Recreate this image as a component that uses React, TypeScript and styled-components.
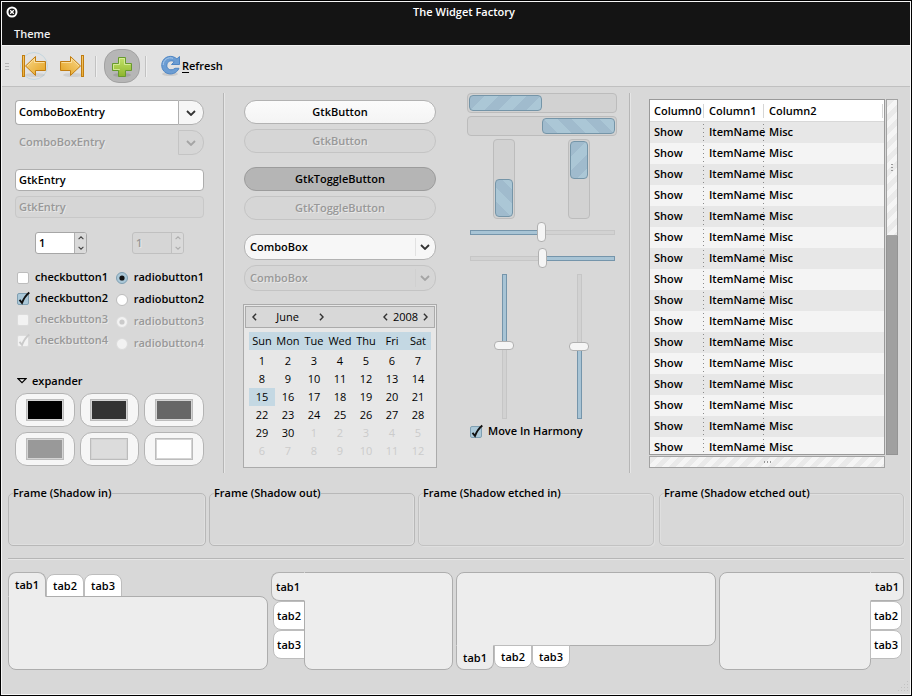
import React, { useState } from 'react';
import styled, { createGlobalStyle, css } from 'styled-components';

const GlobalStyle = createGlobalStyle`
  *, *::before, *::after { box-sizing: border-box; }
  body {
    margin: 0;
    color: #000;
    background: #d8d8d8;
    font: 600 11px/14px 'Open Sans', 'Noto Sans', sans-serif;
  }
  button, input, select { font: inherit; color: inherit; margin: 0; padding: 0; }
  button { cursor: default; }
`;

const disabledText = css`
  color: #989898;
  -webkit-text-fill-color: #989898;
  text-shadow: 1px 1px 0 #e8e8e8;
  opacity: 1;
`;

/* ---------- window ---------- */

const Window = styled.div`
  display: flex;
  flex-direction: column;
  min-height: 100vh;
  border: 1px solid #000;
  background: #d8d8d8;
  box-shadow: inset 0 0 0 1px #f6f6f6;
  padding: 1px;
`;

const TitleBar = styled.header`
  display: flex;
  align-items: center;
  height: 20px;
  padding-left: 4px;
  background: #141414;
  color: #fff;
`;

const CloseButton = styled.button`
  display: flex;
  width: 12px;
  height: 12px;
  border: 0;
  background: none;
`;

const Title = styled.h1`
  flex: 1;
  margin: 0;
  font: inherit;
  text-align: center;
`;

const MenuBar = styled.nav`
  display: flex;
  align-items: center;
  height: 23px;
  padding: 0 12px;
  background: #141414;
`;

const MenuItem = styled.button`
  border: 0;
  background: none;
  color: #f0f0f0;
`;

/* ---------- toolbar ---------- */

const Toolbar = styled.div`
  display: flex;
  align-items: center;
  height: 42px;
  padding-left: 3px;
  border-top: 1px solid #f2f2f2;
  border-bottom: 1px solid #c0c0c0;
  background: #e2e2e2;
`;

const Handle = styled.span`
  width: 4px;
  height: 7px;
  margin-right: 11px;
  background: repeating-linear-gradient(#b4b4b4 0 1px, transparent 1px 3px);
`;

const ToolSeparator = styled.span<{ $left: number; $right: number }>`
  width: 2px;
  height: 21px;
  margin: 0 ${p => p.$right}px 0 ${p => p.$left}px;
  background: #c2c2c2;
  border-right: 1px solid #efefef;
`;

const ToolButton = styled.button<{ $look?: 'ring' | 'pressed' }>`
  display: flex;
  align-items: center;
  justify-content: center;
  width: 28px;
  height: 28px;
  border: 1px solid ${p => (p.$look === 'ring' ? '#c3d6df' : 'transparent')};
  border-radius: 50%;
  background: none;
  svg { flex: none; }
  ${p => p.$look === 'pressed' && css`
    width: 36px;
    height: 34px;
    border-color: #a2a2a2;
    border-radius: 15px;
    background: #b6b6b6;
  `}
`;

const LastSlot = styled.span`
  margin-left: 10px;
`;

const RefreshButton = styled.button`
  display: flex;
  align-items: center;
  gap: 1px;
  border: 0;
  background: none;
  u { text-underline-offset: 2px; }
`;

/* ---------- main area ---------- */

const Main = styled.main`
  display: flex;
  padding: 6px 12px 0 13px;
`;

const Column = styled.section<{ $grow: number; $top?: number }>`
  display: flex;
  flex-direction: column;
  flex: ${p => p.$grow} 1 0;
  min-width: 0;
  padding-top: ${p => p.$top ?? 7}px;
`;

const ProgressColumn = styled(Column)`
  margin-left: 31px;
`;

const Divider = styled.div<{ $left: number; $right: number }>`
  width: 2px;
  height: 380px;
  margin: 0 ${p => p.$right}px 0 ${p => p.$left}px;
  background: #b6b6b6;
  border-right: 1px solid #e6e6e6;
`;

const Stack = styled.div<{ $gap: number; $top?: number }>`
  display: flex;
  flex-direction: column;
  gap: ${p => p.$gap}px;
  margin-top: ${p => p.$top ?? 0}px;
`;

const ComboEntry = styled.div`
  display: flex;
  height: 25px;
`;

const EntryBox = styled.input`
  flex: 1;
  width: 100%;
  min-width: 0;
  height: 22px;
  padding: 0 3px 1px;
  border: 1px solid #adadad;
  border-radius: 4px;
  background: #fff;
  outline: 0;
  &:disabled { ${disabledText} background: #d6d6d6; border-color: #c8c8c8; }
`;

const ComboInput = styled(EntryBox)`
  height: 25px;
  padding-bottom: 2px;
  border-radius: 4px 0 0 4px;
  border-right: 0;
  &:disabled { background: transparent; border-color: transparent; }
`;

const ComboArrow = styled.button`
  display: grid;
  place-items: center;
  width: 26px;
  height: 25px;
  border: 1px solid #b0b0b0;
  border-radius: 0 12px 12px 0;
  background: #f6f6f6;
  color: #333;
  &:disabled { background: #d6d6d6; border-color: #c4c4c4; color: #a4a4a4; }
`;

const SingleEntry = styled(EntryBox)`
  flex: none;
`;

const SpinRow = styled.div`
  display: flex;
  justify-content: space-between;
  margin: 14px 20px 0;
`;

const Spin = styled.div<{ $off?: boolean }>`
  display: flex;
  width: 52px;
  height: 22px;
  border: 1px solid ${p => (p.$off ? '#c0c0c0' : '#a6a6a6')};
  border-radius: 3px;
  background: ${p => (p.$off ? '#d6d6d6' : '#fff')};
  overflow: hidden;
  input {
    flex: 1;
    min-width: 0;
    padding: 0 3px;
    border: 0;
    background: transparent;
    outline: 0;
  }
  input:disabled { ${disabledText} }
`;

const SpinButtons = styled.div<{ $off?: boolean }>`
  display: flex;
  flex-direction: column;
  width: 12px;
  border-left: 1px solid ${p => (p.$off ? '#c0c0c0' : '#b0b0b0')};
  background: #dadada;
  color: ${p => (p.$off ? '#adadad' : '#444')};
  button {
    display: grid;
    place-items: center;
    flex: 1;
    border: 0;
    background: none;
  }
`;

const Choices = styled.div`
  display: flex;
  justify-content: space-between;
  margin: 17px 0 0 2px;
`;

const ChoiceColumn = styled.div<{ $gap: number }>`
  display: flex;
  flex-direction: column;
  gap: ${p => p.$gap}px;
`;

const Choice = styled.label<{ $off?: boolean }>`
  display: flex;
  align-items: center;
  gap: 6px;
  height: 14px;
  white-space: nowrap;
  ${p => p.$off && disabledText}
`;

const ChoiceText = styled.span`
  padding-bottom: 2px;
`;

const Mark = styled.span`
  display: grid;
  width: 12px;
  height: 12px;
  input, svg { grid-area: 1 / 1; }
  svg { pointer-events: none; overflow: visible; visibility: hidden; color: #111; }
  input:checked + svg { visibility: visible; }
  input {
    appearance: none;
    width: 12px;
    height: 12px;
    border: 1px solid #bdbdbd;
    border-radius: 2px;
    background: #fff;
  }
  input:checked { background: #abc8d8; border-color: #7f9fb2; }
  input[type='radio'] { border-radius: 50%; }
  input:disabled { background: #f2f2f2; border-color: #dcdcdc; }
  input:disabled + svg { color: #cacaca; }
`;

const Expander = styled.button`
  display: flex;
  align-items: center;
  gap: 5px;
  width: max-content;
  height: 14px;
  margin: 23px 0 5px 2px;
  border: 0;
  background: none;
`;

const Swatches = styled.div`
  display: grid;
  grid-template-columns: repeat(3, 1fr);
  gap: 5px;
`;

const SwatchButton = styled.button`
  display: grid;
  place-items: center;
  height: 34px;
  border: 1px solid #b4b4b4;
  border-radius: 12px;
  background: #f6f6f6;
`;

const Swatch = styled.span<{ $color: string }>`
  width: 38px;
  height: 22px;
  border: 1px solid #bcbcbc;
  background: ${p => p.$color};
  box-shadow: inset 0 0 0 1px #d4d4d4;
`;

const PushButton = styled.button`
  height: 24px;
  border: 1px solid #b2b2b2;
  border-radius: 12px;
  background: linear-gradient(#fbfbfb, #f4f4f4);
  &[aria-pressed='true'] { background: #b5b5b5; border-color: #9c9c9c; }
  &:disabled { ${disabledText} background: #d6d6d6; border-color: #c4c4c4; }
`;

const SelectWrap = styled.div<{ $off?: boolean }>`
  display: grid;
  align-items: center;
  color: ${p => (p.$off ? '#a4a4a4' : '#333')};
  > * { grid-area: 1 / 1; }
  > span {
    justify-self: end;
    display: grid;
    place-items: center;
    width: 18px;
    height: 18px;
    margin-right: 3px;
    border-left: 1px solid ${p => (p.$off ? '#d0d0d0' : '#e2e2e2')};
    pointer-events: none;
  }
  select {
    appearance: none;
    width: 100%;
    height: 26px;
    padding: 0 5px;
    border: 1px solid #b2b2b2;
    border-radius: 12px;
    background: #f7f7f7;
    color: #000;
  }
  select:disabled { ${disabledText} background: #d6d6d6; border-color: #c4c4c4; }
`;

/* ---------- calendar ---------- */

const CalendarBox = styled.div`
  margin: 13px -1px 0;
  padding: 1px 1px 7px;
  border: 1px solid #ababab;
  background: #e7e7e7;
  font-weight: normal;
`;

const CalendarHead = styled.div`
  display: flex;
  justify-content: space-between;
  align-items: center;
  height: 22px;
  padding: 0 3px;
  border: 1px solid #ababab;
  background: #d8d8d8;
`;

const Stepper = styled.div<{ $width: number }>`
  display: flex;
  align-items: center;
  justify-content: space-between;
  width: ${p => p.$width}px;
  button {
    display: grid;
    place-items: center;
    width: 10px;
    height: 14px;
    border: 0;
    background: none;
    color: #333;
  }
`;

const Days = styled.table`
  width: calc(100% - 8px);
  margin: 4px 4px 0;
  border-collapse: collapse;
  table-layout: fixed;
  th, td { height: 18px; padding: 0; font-weight: normal; text-align: center; line-height: 18px; }
  thead tr { background: #c4d8e3; border-bottom: 2px solid #e7e7e7; }
`;

const Day = styled.td<{ $dim?: boolean; $today?: boolean }>`
  color: ${p => (p.$dim ? '#cbcbcb' : '#000')};
  background: ${p => (p.$today ? '#c4d8e3' : 'none')};
`;

/* ---------- progress bars and sliders ---------- */

const Trough = styled.div<{ $vertical?: boolean; $end?: boolean }>`
  display: flex;
  flex-direction: ${p => (p.$vertical ? 'column' : 'row')};
  justify-content: ${p => (p.$end ? 'flex-end' : 'flex-start')};
  width: ${p => (p.$vertical ? '22px' : 'auto')};
  height: ${p => (p.$vertical ? 80 : 20)}px;
  padding: 1px;
  border: 1px solid #bcbcbc;
  border-radius: 4px;
  background: #d2d2d2;
`;

const Fill = styled.div<{ $angle: number }>`
  flex: 0 0 50%;
  border: 1px solid #7595a8;
  border-radius: 4px;
  background: repeating-linear-gradient(${p => p.$angle}deg, #a0bbcd 0 10px, #abc7d6 10px 20px);
`;

const TroughPair = styled.div`
  display: flex;
  justify-content: space-between;
  padding: 0 27px 0 26px;
`;

const SliderPair = styled.div`
  display: flex;
  justify-content: space-around;
`;

const thumb = css`
  appearance: none;
  border: 1px solid #b0b0b0;
  border-radius: 4px;
  background: #f5f5f5;
`;

const HSlider = styled.input<{ $fromEnd?: boolean }>`
  appearance: none;
  display: block;
  width: calc(100% - 5px);
  height: 20px;
  margin: 0 2px 0 3px;
  background: none;
  &::-webkit-slider-runnable-track {
    height: 5px;
    border: 1px solid;
    border-image: linear-gradient(${p => (p.$fromEnd ? '270deg' : '90deg')}, #7595ab 50%, #c6c6c6 50%) 1;
    background: linear-gradient(${p => (p.$fromEnd ? '270deg' : '90deg')}, #a8c4d5 50%, #d2d2d2 50%);
  }
  &::-webkit-slider-thumb {
    ${thumb}
    width: 9px;
    height: 20px;
    margin-top: -9px;
  }
`;

const VSlider = styled.input<{ $fromEnd?: boolean }>`
  appearance: none;
  writing-mode: vertical-lr;
  width: 20px;
  height: 145px;
  background: none;
  &::-webkit-slider-runnable-track {
    width: 5px;
    border: 1px solid;
    border-image: linear-gradient(${p => (p.$fromEnd ? '0deg' : '180deg')}, #7595ab 50%, #c6c6c6 50%) 1;
    background: linear-gradient(${p => (p.$fromEnd ? '0deg' : '180deg')}, #a8c4d5 50%, #d2d2d2 50%);
  }
  &::-webkit-slider-thumb {
    ${thumb}
    width: 20px;
    height: 9px;
    margin-left: -9px;
  }
`;

const HarmonySlot = styled.div`
  margin: 6px 0 0 3px;
`;

/* ---------- list ---------- */

const ListGrid = styled.div`
  display: grid;
  grid-template-columns: minmax(0, 1fr) 12px;
  gap: 1px;
`;

const ListPane = styled.div`
  height: 356px;
  border: 1px solid #999;
  overflow: hidden;
`;

const List = styled.table`
  width: 100%;
  border-collapse: separate;
  border-spacing: 0;
  table-layout: fixed;
  col:nth-child(1) { width: 54px; }
  col:nth-child(2) { width: 60px; }
  th, td { height: 21px; padding: 0 0 1px 4px; text-align: left; white-space: nowrap; }
  th + th, td + td { padding-left: 5px; }
  th { height: 22px; padding-bottom: 0; font-weight: inherit; border-bottom: 1px solid #d8d8d8; background: linear-gradient(#d6d6d6, #d6d6d6) right 4px / 1px 14px no-repeat #fff; }
  th:last-child { background-position: right 1px top 4px; }
  td:not(:last-child) { background: repeating-linear-gradient(transparent 0 2px, #8c8c8c 2px 3px, transparent 3px 4px) right / 1px 100% no-repeat; }
  tbody tr:nth-child(odd) { background: #e7e7e7; }
  tbody tr:nth-child(even) { background: #f4f4f4; }
`;

const Thumb = styled.div<{ $vertical?: boolean }>`
  display: grid;
  place-items: center;
  height: ${p => (p.$vertical ? 137 : 12)}px;
  border: 1px solid #a2a2a2;
  background: repeating-linear-gradient(135deg, #eaeaea 0 5px, #f5f5f5 5px 10px);
  span {
    width: ${p => (p.$vertical ? 2 : 7)}px;
    height: ${p => (p.$vertical ? 7 : 2)}px;
    background: repeating-linear-gradient(${p => (p.$vertical ? 180 : 90)}deg, #999 0 1px, transparent 1px 3px);
  }
`;

const ScrollTrack = styled.div`
  background: #a0a0a0;
  border: 1px solid #949494;
  ${Thumb} { margin: -1px; }
`;

/* ---------- frames ---------- */

const Frames = styled.div`
  display: grid;
  grid-template-columns: 198fr 206fr 236fr 247fr;
  align-items: start;
  gap: 3px;
  padding: 13px 6px 0;
`;

const Frame = styled.fieldset<{ $soft?: boolean }>`
  min-width: 0;
  height: 60px;
  margin: 0;
  padding: 0 4px;
  border: 1px solid ${p => (p.$soft ? '#c2c2c2' : '#b8b8b8')};
  border-radius: 5px;
  box-shadow: ${p => (p.$soft ? 'inset 1px 1px 0 #dfdfdf, 1px 1px 0 #dfdfdf' : 'inset -1px -1px 0 #dfdfdf')};
  legend { height: 14px; padding: 0; white-space: nowrap; }
  &:last-child { margin-left: 2px; }
`;

const Rule = styled.hr`
  height: 2px;
  margin: 12px 6px 0;
  border: 0;
  border-top: 1px solid #b6b6b6;
  background: #e6e6e6;
`;

/* ---------- notebooks ---------- */

type Side = 'top' | 'left' | 'bottom' | 'right';

const directions = { top: 'column', bottom: 'column-reverse', left: 'row', right: 'row-reverse' };
const panelRadius = { top: '0 8px 8px 8px', bottom: '8px 8px 8px 0', left: '0 8px 8px 8px', right: '8px 0 8px 8px' };
const tabRadius = { top: '8px 8px 0 0', bottom: '0 0 8px 8px', left: '8px 0 0 8px', right: '0 8px 8px 0' };
const tabAlign = { top: 'flex-end', bottom: 'flex-start', left: 'flex-end', right: 'flex-start' };
const opposite = { top: 'bottom', bottom: 'top', left: 'right', right: 'left' };
const isRow = (s: Side) => s === 'top' || s === 'bottom';

const Notebooks = styled.div`
  display: flex;
  gap: 3px;
  padding: 12px 6px 0;
`;

const NotebookBox = styled.div<{ $side: Side; $grow: number }>`
  display: flex;
  flex-direction: ${p => directions[p.$side]};
  flex: ${p => p.$grow} 1 0;
  min-width: 0;
  height: 98px;
`;

const TabList = styled.div<{ $side: Side }>`
  display: flex;
  flex-direction: ${p => (isRow(p.$side) ? 'row' : 'column')};
  align-items: ${p => tabAlign[p.$side]};
  margin-${p => opposite[p.$side]}: -1px;
`;

const Tab = styled.button<{ $side: Side }>`
  width: ${p => (isRow(p.$side) ? 38 : 32)}px;
  height: ${p => (isRow(p.$side) ? 23 : 29)}px;
  border: 1px solid #bdbdbd;
  border-radius: ${p => tabRadius[p.$side]};
  background: #fff;
  &[aria-selected='true'] {
    position: relative;
    z-index: 1;
    width: ${p => (isRow(p.$side) ? 38 : 34)}px;
    height: ${p => (isRow(p.$side) ? 25 : 29)}px;
    border-color: #b0b0b0;
    border-${p => opposite[p.$side]}-color: #ededed;
    background: #ededed;
  }
`;

const Panel = styled.div<{ $side: Side }>`
  flex: 1;
  border: 1px solid #adadad;
  border-radius: ${p => panelRadius[p.$side]};
  background: #ededed;
`;

const Footer = styled.footer`
  display: flex;
  flex: 1;
  align-items: flex-end;
  justify-content: flex-end;
  padding: 0 1px 2px;
`;

/* ---------- drawings ---------- */

const Chevron = ({ dir = 'down', w = 10, h = 6 }: { dir?: 'down' | 'up' | 'left' | 'right'; w?: number; h?: number }) => {
  const paths = { down: 'M1 1 L5 5 L9 1', up: 'M1 5 L5 1 L9 5', left: 'M5 1 L1 5 L5 9', right: 'M1 1 L5 5 L1 9' };
  const box = dir === 'down' || dir === 'up' ? '0 0 10 6' : '0 0 6 10';
  return (
    <svg width={w} height={h} viewBox={box} fill="none" stroke="currentColor" strokeWidth="1.8">
      <path d={paths[dir]} />
    </svg>
  );
};

const CloseIcon = () => (
  <svg width="12" height="12" viewBox="0 0 12 12">
    <circle cx="6" cy="6" r="4.500" fill="#111" stroke="#fff" strokeWidth="2" />
    <path d="M4.200 4.200 L7.800 7.800 M7.800 4.200 L4.200 7.800" stroke="#fff" strokeWidth="1.300" />
  </svg>
);

const GoEndIcon = ({ id, last }: { id: string; last?: boolean }) => (
  <svg width="26" height="24" viewBox="-1 0 26 24">
    <defs>
      <linearGradient id={id} x1="0" y1="0" x2="1" y2="1">
        <stop offset="0" stopColor="#f9d98c" />
        <stop offset="1" stopColor="#e3a01c" />
      </linearGradient>
    </defs>
    <ellipse cx="13" cy="21" rx="10" ry="2" fill="#000" opacity=".08" />
    <g transform={last ? 'matrix(-1 0 0 1 24 0)' : undefined} stroke="#c17d11" fill={`url(#${id})`}>
      <rect x=".5" y="1.500" width="2" height="21" />
      <path d="M3.500 12 L13.500 2.500 V7.500 H23.500 V16.500 H13.500 V21.500 Z" strokeLinejoin="round" />
      <path d="M5 12 L12.500 4.800 V8.500 H22.500" fill="none" stroke="#fce6ae" opacity=".8" />
    </g>
  </svg>
);

const AddIcon = () => (
  <svg width="22" height="24" viewBox="0 0 22 24">
    <defs>
      <linearGradient id="plus" x1="0" y1="0" x2="0" y2="1">
        <stop offset="0" stopColor="#c3e26a" />
        <stop offset="1" stopColor="#8db52c" />
      </linearGradient>
    </defs>
    <ellipse cx="11" cy="21" rx="9" ry="2" fill="#000" opacity=".1" />
    <path d="M7.500 3.500 H14.500 V9.500 H20.500 V16.500 H14.500 V22.500 H7.500 V16.500 H1.500 V9.500 H7.500 Z" fill="url(#plus)" stroke="#679a2e" />
    <path d="M8.500 16 V15.500 H2.500 V10.500 H8.500 V4.500 H13.500 V10.500 H19.500" fill="none" stroke="#ddf0a4" opacity=".8" />
  </svg>
);

const RefreshIcon = () => (
  <svg width="20" height="22" viewBox="0 0 20 22">
    <ellipse cx="9" cy="19" rx="8" ry="2" fill="#000" opacity=".1" />
    <path
      d="M18.500 1.500 V9.500 H10.500 L13.300 6.800 C10.500 4.600 6.300 6.200 5.800 10 C5.400 14.600 10.600 16.300 14 13.300 H18 C15.800 18.300 10 20.500 5 17.800 C0 15 -.6 8 3.200 4 C6.500 .6 12 .4 15.900 3.900 Z"
      fill="#6c9dd3" stroke="#4f86c4" strokeLinejoin="round"
    />
    <path d="M2.200 10 C2.200 5 7 1.500 12 3.300" fill="none" stroke="#a9c9ea" />
  </svg>
);

const CheckIcon = () => (
  <svg width="12" height="12" viewBox="0 0 12 12">
    <path d="M2.500 6.800 L5 9.800 C6.500 6 8.500 2.500 12.300 -.5" fill="none" stroke="currentColor" strokeWidth="1.900" />
  </svg>
);

const DotIcon = () => (
  <svg width="12" height="12" viewBox="0 0 12 12">
    <circle cx="6" cy="6" r="2.600" fill="currentColor" />
  </svg>
);

const GripIcon = () => (
  <svg width="12" height="12" viewBox="0 0 12 12" fill="#c2c2c2">
    {[0, 1, 2, 3].map(r =>
      Array.from({ length: r + 1 }, (_, c) => <rect key={`${r}-${c}`} x={10 - c * 3} y={r * 3 + 1} width="1" height="1" />),
    )}
  </svg>
);

/* ---------- widgets ---------- */

const CheckButton = ({ label, on, off }: { label: string; on?: boolean; off?: boolean }) => (
  <Choice $off={off}>
    <Mark>
      <input type="checkbox" defaultChecked={on} disabled={off} />
      <CheckIcon />
    </Mark>
    <ChoiceText>{label}</ChoiceText>
  </Choice>
);

const RadioButton = ({ label, on, off }: { label: string; on?: boolean; off?: boolean }) => (
  <Choice $off={off}>
    <Mark>
      <input type="radio" name={off ? 'radios-off' : 'radios'} defaultChecked={on} disabled={off} />
      <DotIcon />
    </Mark>
    <ChoiceText>{label}</ChoiceText>
  </Choice>
);

const SpinButton = ({ off }: { off?: boolean }) => {
  const [value, setValue] = useState(1);
  return (
    <Spin $off={off}>
      <input aria-label="Value" value={value} disabled={off} onChange={e => setValue(Number(e.target.value) || 0)} />
      <SpinButtons $off={off}>
        <button aria-label="Increase" disabled={off} onClick={() => setValue(value + 1)}><Chevron dir="up" w={6} h={4} /></button>
        <button aria-label="Decrease" disabled={off} onClick={() => setValue(value - 1)}><Chevron w={6} h={4} /></button>
      </SpinButtons>
    </Spin>
  );
};

const ComboBox = ({ off }: { off?: boolean }) => (
  <SelectWrap $off={off}>
    <select aria-label="ComboBox" disabled={off}><option>ComboBox</option></select>
    <span><Chevron /></span>
  </SelectWrap>
);

const weekdays = ['Sun', 'Mon', 'Tue', 'Wed', 'Thu', 'Fri', 'Sat'];

const Calendar = () => (
  <CalendarBox>
    <CalendarHead>
      <Stepper $width={77}>
        <button aria-label="Previous month"><Chevron dir="left" w={5} h={8} /></button>
        <span>June</span>
        <button aria-label="Next month"><Chevron dir="right" w={5} h={8} /></button>
      </Stepper>
      <Stepper $width={51}>
        <button aria-label="Previous year"><Chevron dir="left" w={5} h={8} /></button>
        <span>2008</span>
        <button aria-label="Next year"><Chevron dir="right" w={5} h={8} /></button>
      </Stepper>
    </CalendarHead>
    <Days>
      <thead>
        <tr>{weekdays.map(d => <th key={d}>{d}</th>)}</tr>
      </thead>
      <tbody>
        {[0, 1, 2, 3, 4, 5].map(w => (
          <tr key={w}>
            {weekdays.map((d, i) => {
              const n = w * 7 + i + 1;
              return <Day key={d} $dim={n > 30} $today={n === 15}>{n > 30 ? n - 30 : n}</Day>;
            })}
          </tr>
        ))}
      </tbody>
    </Days>
  </CalendarBox>
);

const Notebook = ({ side, grow }: { side: Side; grow: number }) => {
  const [active, setActive] = useState('tab1');
  return (
    <NotebookBox $side={side} $grow={grow}>
      <TabList $side={side} role="tablist">
        {['tab1', 'tab2', 'tab3'].map(t => (
          <Tab key={t} $side={side} role="tab" aria-selected={t === active} onClick={() => setActive(t)}>{t}</Tab>
        ))}
      </TabList>
      <Panel $side={side} role="tabpanel" />
    </NotebookBox>
  );
};

const swatchColors = ['#000', '#333', '#666', '#999', '#dcdcdc', '#fff'];

export default function App() {
  const [pressed, setPressed] = useState(true);
  const [open, setOpen] = useState(true);
  return (
    <>
      <GlobalStyle />
      <Window>
        <TitleBar>
          <CloseButton aria-label="Close"><CloseIcon /></CloseButton>
          <Title>The Widget Factory</Title>
        </TitleBar>
        <MenuBar><MenuItem>Theme</MenuItem></MenuBar>
        <Toolbar role="toolbar">
          <Handle />
          <ToolButton $look="ring" aria-label="First"><GoEndIcon id="arrow-first" /></ToolButton>
          <LastSlot><ToolButton aria-label="Last"><GoEndIcon id="arrow-last" last /></ToolButton></LastSlot>
          <ToolSeparator $left={9} $right={7} />
          <ToolButton $look="pressed" aria-label="Add"><AddIcon /></ToolButton>
          <ToolSeparator $left={5} $right={14} />
          <RefreshButton><RefreshIcon /><span><u>R</u>efresh</span></RefreshButton>
        </Toolbar>

        <Main>
          <Column $grow={189}>
            <Stack $gap={5}>
              <ComboEntry>
                <ComboInput aria-label="Combo entry" defaultValue="ComboBoxEntry" />
                <ComboArrow aria-label="Open list"><Chevron /></ComboArrow>
              </ComboEntry>
              <ComboEntry>
                <ComboInput aria-label="Combo entry, disabled" defaultValue="ComboBoxEntry" disabled />
                <ComboArrow aria-label="Open list" disabled><Chevron /></ComboArrow>
              </ComboEntry>
            </Stack>
            <Stack $gap={5} $top={14}>
              <SingleEntry aria-label="Entry" defaultValue="GtkEntry" />
              <SingleEntry aria-label="Entry, disabled" defaultValue="GtkEntry" disabled />
            </Stack>
            <SpinRow><SpinButton /><SpinButton off /></SpinRow>
            <Choices>
              <ChoiceColumn $gap={7}>
                <CheckButton label="checkbutton1" />
                <CheckButton label="checkbutton2" on />
                <CheckButton label="checkbutton3" off />
                <CheckButton label="checkbutton4" on off />
              </ChoiceColumn>
              <ChoiceColumn $gap={8}>
                <RadioButton label="radiobutton1" on />
                <RadioButton label="radiobutton2" />
                <RadioButton label="radiobutton3" on off />
                <RadioButton label="radiobutton4" off />
              </ChoiceColumn>
            </Choices>
            <Expander aria-expanded={open} onClick={() => setOpen(!open)}>
              <svg width="10" height="6" viewBox="0 0 10 6"><path d="M1 .7 H9 L5 4.700 Z" fill="#eee" stroke="#000" strokeWidth="1.200" /></svg>
              expander
            </Expander>
            {open && (
              <Swatches>
                {swatchColors.map(c => <SwatchButton key={c} aria-label={c}><Swatch $color={c} /></SwatchButton>)}
              </Swatches>
            )}
          </Column>

          <Divider $left={19} $right={19} />

          <Column $grow={192}>
            <Stack $gap={5}>
              <PushButton>GtkButton</PushButton>
              <PushButton disabled>GtkButton</PushButton>
            </Stack>
            <Stack $gap={5} $top={14}>
              <PushButton aria-pressed={pressed} onClick={() => setPressed(!pressed)}>GtkToggleButton</PushButton>
              <PushButton disabled>GtkToggleButton</PushButton>
            </Stack>
            <Stack $gap={5} $top={14}>
              <ComboBox />
              <ComboBox off />
            </Stack>
            <Calendar />
          </Column>

          <ProgressColumn $grow={150} $top={0}>
            <Stack $gap={3}>
              <Trough role="progressbar" aria-label="Left to right"><Fill $angle={135} /></Trough>
              <Trough role="progressbar" aria-label="Right to left" $end><Fill $angle={45} /></Trough>
              <TroughPair>
                <Trough role="progressbar" aria-label="Bottom to top" $vertical $end><Fill $angle={45} /></Trough>
                <Trough role="progressbar" aria-label="Top to bottom" $vertical><Fill $angle={135} /></Trough>
              </TroughPair>
            </Stack>
            <Stack $gap={6} $top={3}>
              <HSlider type="range" aria-label="Horizontal" defaultValue={49} />
              <HSlider type="range" aria-label="Horizontal, inverted" defaultValue={50} $fromEnd />
              <SliderPair>
                <VSlider type="range" aria-label="Vertical" defaultValue={49} />
                <VSlider type="range" aria-label="Vertical, inverted" defaultValue={50} $fromEnd />
              </SliderPair>
            </Stack>
            <HarmonySlot><CheckButton label="Move In Harmony" on /></HarmonySlot>
          </ProgressColumn>

          <Divider $left={12} $right={18} />

          <Column $grow={249} $top={6}>
            <ListGrid>
              <ListPane>
                <List>
                  <colgroup><col /><col /><col /></colgroup>
                  <thead><tr><th>Column0</th><th>Column1</th><th>Column2</th></tr></thead>
                  <tbody>
                    {Array.from({ length: 16 }, (_, i) => (
                      <tr key={i}><td>Show</td><td>ItemName</td><td>Misc</td></tr>
                    ))}
                  </tbody>
                </List>
              </ListPane>
              <ScrollTrack><Thumb $vertical><span /></Thumb></ScrollTrack>
              <Thumb><span /></Thumb>
            </ListGrid>
          </Column>
        </Main>

        <Frames>
          <Frame><legend>Frame (Shadow in)</legend></Frame>
          <Frame><legend>Frame (Shadow out)</legend></Frame>
          <Frame $soft><legend>Frame (Shadow etched in)</legend></Frame>
          <Frame $soft><legend>Frame (Shadow etched out)</legend></Frame>
        </Frames>
        <Rule />
        <Notebooks>
          <Notebook side="top" grow={260} />
          <Notebook side="left" grow={182} />
          <Notebook side="bottom" grow={260} />
          <Notebook side="right" grow={185} />
        </Notebooks>
        <Footer><GripIcon /></Footer>
      </Window>
    </>
  );
}
